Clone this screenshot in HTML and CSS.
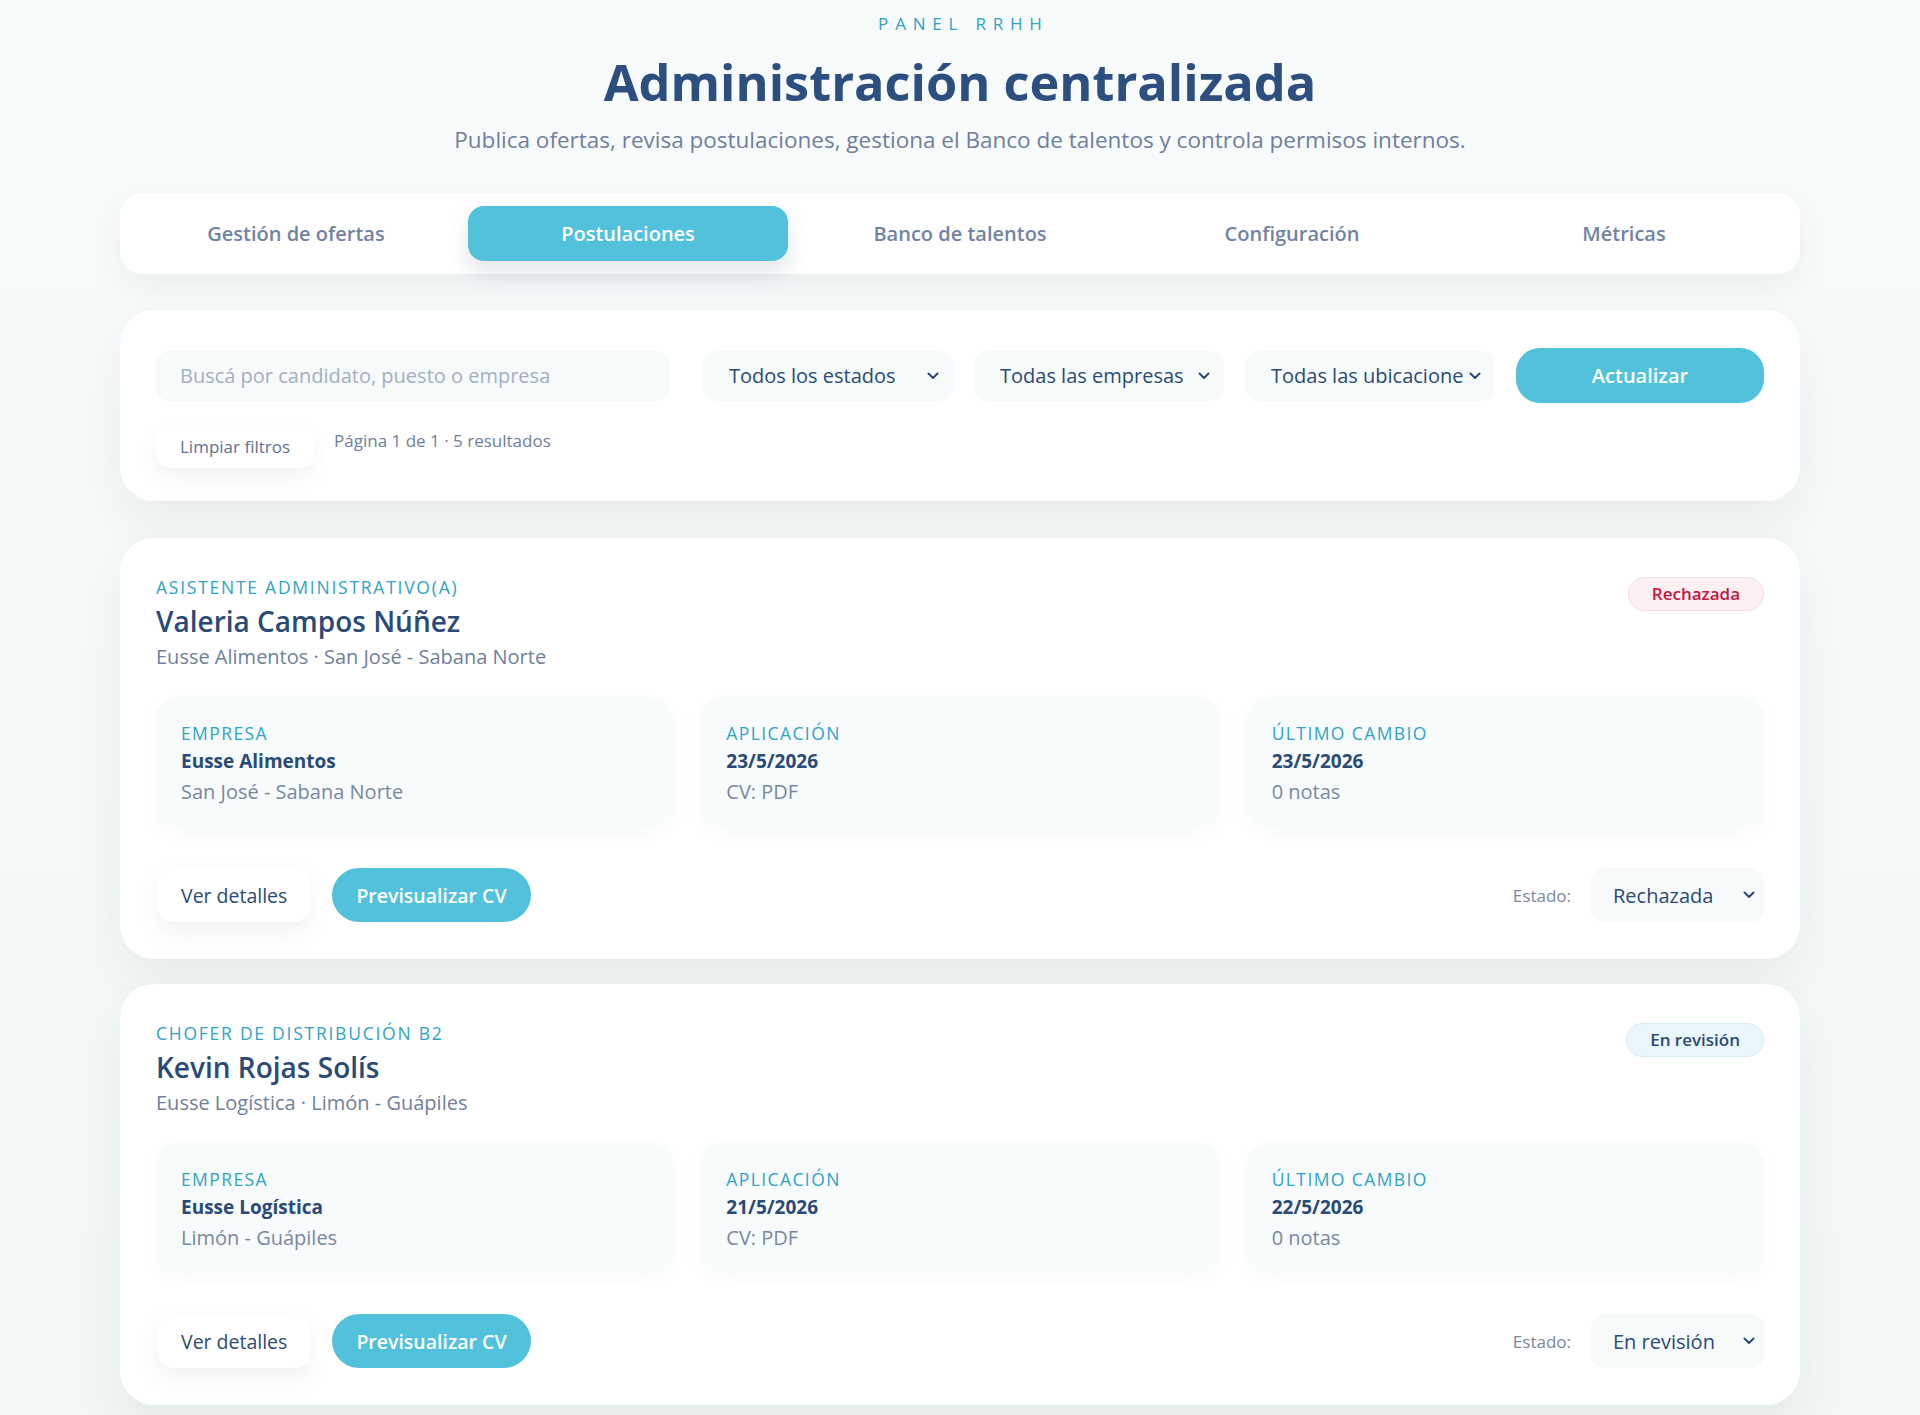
FILE: index.html
```html
<!DOCTYPE html>
<html lang="es">
<head>
  <meta charset="utf-8">
  <title>Panel RRHH - Postulaciones</title>
  <link rel="stylesheet" href="styles.css">
</head>
<body>
  <div class="page">
    <header class="hero">
      <p class="eyebrow">PANEL RRHH</p>
      <h1 class="hero-title">Administración centralizada</h1>
      <p class="hero-sub">Publica ofertas, revisa postulaciones, gestiona el Banco de talentos y controla permisos internos.</p>
    </header>

    <nav class="tabs">
      <button class="tab">Gestión de ofertas</button>
      <button class="tab active">Postulaciones</button>
      <button class="tab">Banco de talentos</button>
      <button class="tab">Configuración</button>
      <button class="tab">Métricas</button>
    </nav>

    <section class="panel filters">
      <div class="filter-row">
        <input class="search" type="text" placeholder="Buscá por candidato, puesto o empresa">
        <div class="select-wrap">
          <select class="select"><option>Todos los estados</option></select>
          <svg class="chev" width="12" height="8" viewBox="0 0 12 8"><path d="M1.5 1.5 6 6l4.5-4.5" fill="none" stroke="#2b4a76" stroke-width="2" stroke-linecap="round" stroke-linejoin="round"/></svg>
        </div>
        <div class="select-wrap">
          <select class="select"><option>Todas las empresas</option></select>
          <svg class="chev" width="12" height="8" viewBox="0 0 12 8"><path d="M1.5 1.5 6 6l4.5-4.5" fill="none" stroke="#2b4a76" stroke-width="2" stroke-linecap="round" stroke-linejoin="round"/></svg>
        </div>
        <div class="select-wrap">
          <select class="select"><option>Todas las ubicaciones</option></select>
          <svg class="chev" width="12" height="8" viewBox="0 0 12 8"><path d="M1.5 1.5 6 6l4.5-4.5" fill="none" stroke="#2b4a76" stroke-width="2" stroke-linecap="round" stroke-linejoin="round"/></svg>
        </div>
        <button class="btn-primary btn-refresh">Actualizar</button>
      </div>
      <div class="filter-meta">
        <button class="btn-ghost">Limpiar filtros</button>
        <span class="meta-text">Página 1 de 1 · 5 resultados</span>
      </div>
    </section>

    <article class="panel application">
      <div class="app-head">
        <div>
          <p class="app-role">ASISTENTE ADMINISTRATIVO(A)</p>
          <h2 class="app-name">Valeria Campos Núñez</h2>
          <p class="app-where">Eusse Alimentos · San José - Sabana Norte</p>
        </div>
        <span class="badge badge-rejected">Rechazada</span>
      </div>
      <div class="info-grid">
        <div class="info">
          <p class="info-label">EMPRESA</p>
          <p class="info-value">Eusse Alimentos</p>
          <p class="info-sub">San José - Sabana Norte</p>
        </div>
        <div class="info">
          <p class="info-label">APLICACIÓN</p>
          <p class="info-value">23/5/2026</p>
          <p class="info-sub">CV: PDF</p>
        </div>
        <div class="info">
          <p class="info-label">ÚLTIMO CAMBIO</p>
          <p class="info-value">23/5/2026</p>
          <p class="info-sub">0 notas</p>
        </div>
      </div>
      <div class="app-actions">
        <div class="actions-left">
          <button class="btn-light">Ver detalles</button>
          <button class="btn-primary btn-cv">Previsualizar CV</button>
        </div>
        <div class="status">
          <span class="status-label">Estado:</span>
          <div class="select-wrap status-select">
            <select class="select"><option>Rechazada</option></select>
            <svg class="chev" width="12" height="8" viewBox="0 0 12 8"><path d="M1.5 1.5 6 6l4.5-4.5" fill="none" stroke="#2b4a76" stroke-width="2" stroke-linecap="round" stroke-linejoin="round"/></svg>
          </div>
        </div>
      </div>
    </article>

    <article class="panel application">
      <div class="app-head">
        <div>
          <p class="app-role">CHOFER DE DISTRIBUCIÓN B2</p>
          <h2 class="app-name">Kevin Rojas Solís</h2>
          <p class="app-where">Eusse Logística · Limón - Guápiles</p>
        </div>
        <span class="badge badge-review">En revisión</span>
      </div>
      <div class="info-grid">
        <div class="info">
          <p class="info-label">EMPRESA</p>
          <p class="info-value">Eusse Logística</p>
          <p class="info-sub">Limón - Guápiles</p>
        </div>
        <div class="info">
          <p class="info-label">APLICACIÓN</p>
          <p class="info-value">21/5/2026</p>
          <p class="info-sub">CV: PDF</p>
        </div>
        <div class="info">
          <p class="info-label">ÚLTIMO CAMBIO</p>
          <p class="info-value">22/5/2026</p>
          <p class="info-sub">0 notas</p>
        </div>
      </div>
      <div class="app-actions">
        <div class="actions-left">
          <button class="btn-light">Ver detalles</button>
          <button class="btn-primary btn-cv">Previsualizar CV</button>
        </div>
        <div class="status">
          <span class="status-label">Estado:</span>
          <div class="select-wrap status-select">
            <select class="select"><option>En revisión</option></select>
            <svg class="chev" width="12" height="8" viewBox="0 0 12 8"><path d="M1.5 1.5 6 6l4.5-4.5" fill="none" stroke="#2b4a76" stroke-width="2" stroke-linecap="round" stroke-linejoin="round"/></svg>
          </div>
        </div>
      </div>
    </article>
  </div>
</body>
</html>
```

FILE: styles.css
```css
* {
  box-sizing: border-box;
}

body {
  margin: 0;
  background: linear-gradient(180deg, #f8fbfb 0%, #f2f6f6 100%);
  font-family: "Open Sans", "Noto Sans", sans-serif;
  color: #2b4a76;
}

p, h1, h2 {
  margin: 0;
}

button, input, select {
  font-family: inherit;
}

.page {
  width: 1680px;
  margin: 0 auto;
  padding: 12px 0 40px;
}

/* header */
.hero {
  text-align: center;
}

.eyebrow {
  font-size: 17px;
  line-height: 24px;
  letter-spacing: 0.4em;
  color: #2fa3c6;
  padding-left: 0.4em;
}

.hero-title {
  margin-top: 15px;
  font-size: 50.5px;
  line-height: 62px;
  font-weight: 700;
  color: #2c4f80;
}

.hero-sub {
  margin-top: 12px;
  font-size: 22.5px;
  line-height: 30px;
  color: #6f7f9c;
}

/* tabs */
.tabs {
  margin-top: 38px;
  display: grid;
  grid-template-columns: repeat(5, 1fr);
  gap: 12px;
  padding: 13px 16px;
  background: #fff;
  border-radius: 22px;
  box-shadow: 0 14px 34px rgba(40, 70, 90, 0.06);
}

.tab {
  height: 55px;
  border: none;
  background: transparent;
  border-radius: 16px;
  font-size: 20px;
  font-weight: 600;
  color: #7283a2;
  cursor: pointer;
}

.tab.active {
  background: #52c2dc;
  color: #fff;
  box-shadow: 0 12px 22px rgba(40, 80, 100, 0.14);
}

/* panels */
.panel {
  background: #fff;
  border-radius: 34px;
  box-shadow: 0 22px 50px rgba(40, 70, 90, 0.07);
}

.filters {
  margin-top: 36px;
  padding: 38px 36px 33px;
}

.filter-row {
  display: grid;
  grid-template-columns: minmax(0, 1fr) repeat(3, 250px) 248px;
  gap: 21px;
  align-items: center;
}

.search {
  height: 50px;
  margin-right: 12px;
  border: none;
  border-radius: 14px;
  background: #f6fafb;
  padding: 0 24px;
  font-size: 20px;
  color: #2b4a76;
  outline: none;
}

.search::placeholder {
  color: #a3afc2;
}

.select-wrap {
  position: relative;
}

.select {
  width: 100%;
  height: 50px;
  border: none;
  border-radius: 14px;
  background: #f6fafb;
  padding: 0 32px 0 26px;
  font-size: 20px;
  color: #2b4a76;
  appearance: none;
  -webkit-appearance: none;
  outline: none;
}

.chev {
  position: absolute;
  right: 14px;
  top: 21px;
  pointer-events: none;
}

.btn-primary {
  border: none;
  background: #52c2dc;
  color: #fff;
  font-weight: 600;
  cursor: pointer;
}

.btn-refresh {
  height: 55px;
  border-radius: 24px;
  font-size: 20px;
}

.filter-meta {
  margin-top: 22px;
  display: flex;
  align-items: flex-start;
  gap: 20px;
}

.btn-ghost {
  border: none;
  background: #fff;
  border-radius: 14px;
  padding: 10px 24px;
  font-size: 17px;
  color: #5d7092;
  box-shadow: 0 10px 20px rgba(60, 70, 90, 0.06);
  cursor: pointer;
}

.meta-text {
  padding-top: 4px;
  font-size: 17px;
  line-height: 24px;
  color: #6f7f9c;
}

/* application cards */
.application {
  margin-top: 37px;
  padding: 37px 36px 37px;
}

.application + .application {
  margin-top: 25px;
}

.app-head {
  display: flex;
  justify-content: space-between;
  align-items: flex-start;
}

.app-role {
  font-size: 17.5px;
  line-height: 24px;
  letter-spacing: 0.1em;
  color: #2fa3c6;
}

.app-name {
  margin-top: 4px;
  font-size: 28px;
  line-height: 36px;
  font-weight: 600;
  color: #2b4a76;
}

.app-where {
  margin-top: 4px;
  font-size: 20px;
  line-height: 28px;
  color: #6f7f9c;
}

.badge {
  margin-top: 2px;
  padding: 4px 23px;
  border-radius: 20px;
  font-size: 17px;
  line-height: 24px;
  font-weight: 600;
}

.badge-rejected {
  background: #fdf0f2;
  border: 1px solid #f8dbe1;
  color: #c8143f;
}

.badge-review {
  background: #e9f7fb;
  border: 1px solid #d3edf5;
  color: #2b4a76;
}

.info-grid {
  margin-top: 26px;
  display: grid;
  grid-template-columns: repeat(3, 1fr);
  gap: 28px;
}

.info {
  background: #f7fbfb;
  border-radius: 22px;
  padding: 25px 25px 22px;
  box-shadow: 0 6px 16px rgba(40, 70, 90, 0.03);
}

.info-label {
  font-size: 17.5px;
  line-height: 22px;
  letter-spacing: 0.08em;
  color: #2fa3c6;
}

.info-value {
  margin-top: 4px;
  font-size: 19px;
  line-height: 26px;
  font-weight: 700;
  color: #2b4a76;
}

.info-sub {
  margin-top: 5px;
  font-size: 20px;
  line-height: 26px;
  color: #7a889f;
}

.app-actions {
  margin-top: 41px;
  display: flex;
  justify-content: space-between;
  align-items: center;
}

.actions-left {
  display: flex;
  gap: 22px;
  padding-left: 2px;
}

.btn-light {
  height: 54px;
  padding: 0 23px;
  border: none;
  border-radius: 16px;
  background: #fff;
  font-size: 19.5px;
  color: #2b4a76;
  box-shadow: 0 10px 24px rgba(40, 70, 90, 0.07);
  cursor: pointer;
}

.btn-cv {
  height: 54px;
  padding: 0 24px;
  border-radius: 27px;
  font-size: 19.5px;
}

.status {
  display: flex;
  align-items: center;
  gap: 20px;
}

.status-label {
  font-size: 17px;
  color: #7a889f;
}

.status-select {
  width: 173px;
}

.status-select .select {
  height: 54px;
  padding: 0 22px;
}

.status-select .chev {
  right: 9px;
  top: 23px;
}
```
